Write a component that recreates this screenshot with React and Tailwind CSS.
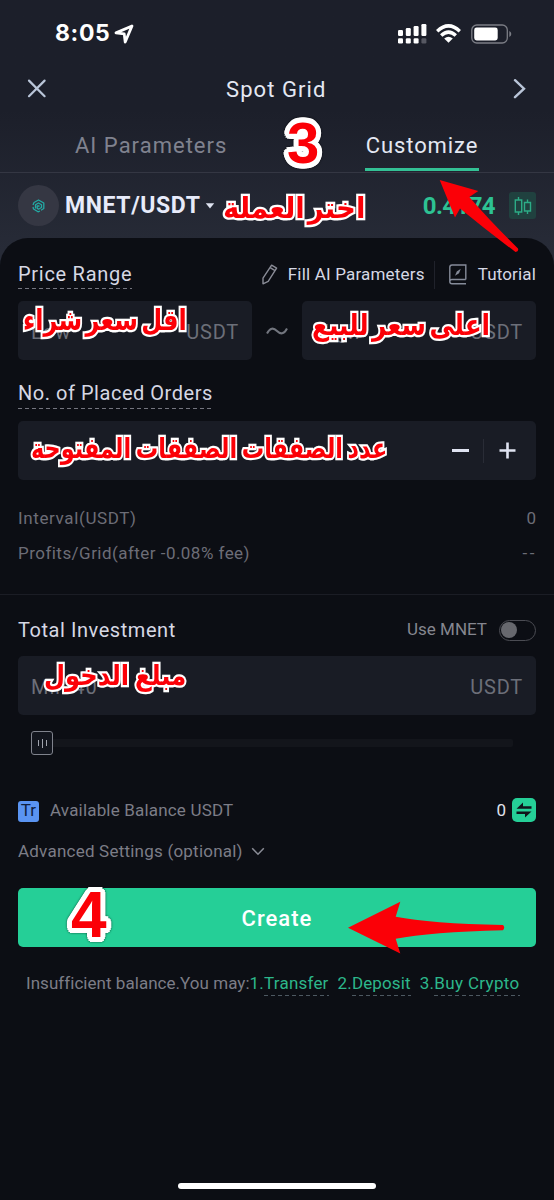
import React from 'react';

const StatusBar = () => (
  <div className="flex h-[66px] items-center justify-between pt-[1px] pr-[42px] pl-[55px]">
    <div className="flex items-center gap-[4px]">
      <span className="font-['Inter'] text-[23px] font-bold tracking-[0.65px] text-white">8:05</span>
      <svg width="20" height="20" viewBox="0 0 20 20" fill="none" stroke="#fff" strokeWidth="2.8" strokeLinejoin="round">
        <path d="M18 2 L2 8.9 L10.2 9.9 L11.2 18 Z" />
      </svg>
    </div>
    <div className="flex items-center">
      {/* Dual SIM signal */}
      <svg width="29" height="20" viewBox="0 0 29 20" fill="#fff">
        <rect x="0" y="6" width="5" height="6" rx="1.2" />
        <rect x="7.8" y="4" width="5" height="8" rx="1.2" />
        <rect x="15.6" y="2" width="5" height="10" rx="1.2" />
        <rect x="23.4" y="0" width="5" height="12" rx="1.2" />
        <rect x="0" y="14.2" width="5" height="5.3" rx="1.2" />
        <rect x="7.8" y="14.2" width="5" height="5.3" rx="1.2" />
        <rect x="15.6" y="14.2" width="5" height="5.3" rx="1.2" />
        <rect x="23.4" y="14.2" width="5" height="5.3" rx="1.2" fill="#565862" />
      </svg>
      <svg className="ml-[9px]" width="25" height="19" viewBox="0 0 25 19" fill="none" stroke="#fff" strokeWidth="3.4">
        <path d="M1.2 7.2 Q12.5 -3.4 23.8 7.2" />
        <path d="M5.2 11.6 Q12.5 4.6 19.8 11.6" />
        <path d="M12.5 18.8 L8.2 14.6 Q12.5 11 16.8 14.6 Z" fill="#fff" stroke="none" />
      </svg>
      <svg className="ml-[10px]" width="41" height="20" viewBox="0 0 41 20" fill="none">
        <rect x="0.8" y="1" width="35.5" height="18" rx="5" stroke="#7b7d85" strokeWidth="1.3" />
        <rect x="3.2" y="3.5" width="23.5" height="13" rx="2.4" fill="#fff" />
        <path d="M38.3 7 Q40.3 8 40.3 10 Q40.3 12 38.3 13 Z" fill="#7b7d85" />
      </svg>
    </div>
  </div>
);

const TitleBar = () => (
  <div className="flex h-[46px] items-center pr-[28px] pl-[27px]">
    <svg width="20" height="20" viewBox="0 0 20 20" stroke="#b9c5d8" strokeWidth="2.2" strokeLinecap="round">
      <path d="M2 1.6 L17.6 17.2 M17.6 1.6 L2 17.2" />
    </svg>
    <h1 className="ml-[179px] text-[22px] tracking-[1.07px] text-[#e4e8f3]">Spot Grid</h1>
    <svg className="ml-auto" width="13" height="20" viewBox="0 0 13 20" fill="none" stroke="#b9c5d8" strokeWidth="2.4" strokeLinecap="round">
      <path d="M2 1.2 L11 9.7 L2 18.2" />
    </svg>
  </div>
);

const Tabs = () => (
  <div className="flex h-[61px] justify-between border-b border-[#343743] pr-[75px] pl-[75px] text-[22px]">
    <div className="flex h-[60px] items-center pt-[7px] tracking-[1.02px] text-[#80828f]">AI Parameters</div>
    <div className="flex h-[59px] w-[114px] items-center justify-center border-b-[3px] border-[#33c195] pt-[11px] tracking-[0.91px] whitespace-nowrap text-[#e4e8f3]">
      Customize
    </div>
  </div>
);

const PairBar = () => (
  <div className="flex h-[65px] items-center px-[18px]">
    <div className="flex size-[41px] items-center justify-center rounded-full bg-[#353743]">
      <svg width="13" height="14" viewBox="0 0 13 14" fill="none" stroke="#23aaa4" strokeWidth="1.3" strokeLinejoin="round">
        <path d="M1 6 L2 3.5 L6.5 1 L11.8 4 V9.5 L9 11.3 M1 8 L1.5 10 L6 12.8 L8 12" />
        <path d="M3.5 9.5 V5.8 L6.5 4 L9.5 5.8 V8.5 L6.5 10.2 L5.2 9.2 V7 H7.5" />
      </svg>
    </div>
    <span className="ml-[6px] pt-[1px] text-[23px] font-bold tracking-[0.6px] text-[#e7ebfa]">MNET/USDT</span>
    <svg className="ml-[4px]" width="10" height="6" viewBox="0 0 10 6" fill="#dfe3f0">
      <path d="M0.8 0.3 H9.2 L5 5.4 Z" />
    </svg>
    <span className="ml-auto text-[24px] font-bold tracking-[-0.6px] text-[#2dc293]">0.4174</span>
    <div className="ml-[14px] flex size-[27px] items-center justify-center rounded-[3px] bg-[#20413f]">
      <svg width="18" height="20" viewBox="0 0 18 20" fill="none" stroke="#2cac87" strokeWidth="1.4">
        <path d="M4.5 1 V4 M4.5 16 V19 M1.3 4 H7.7 V16 H1.3 Z" />
        <path d="M13.5 3.5 V6.5 M13.5 15 V18 M10.5 6.5 H16.5 V15 H10.5 Z" />
      </svg>
    </div>
  </div>
);

// Label with the dashed "has a tooltip" underline
const HintLabel = ({ children, className }) => (
  <div
    className={`flex h-[29px] items-center bg-[linear-gradient(90deg,#74757f_4.5px,transparent_4.5px)] bg-[length:7px_1px] bg-bottom-left bg-repeat-x pb-[2px] text-[20px] whitespace-nowrap text-[#d6d8e4] ${className}`}
  >
    {children}
  </div>
);

const Field = ({ placeholder, unit, className }) => (
  <div className={`flex h-[59px] items-center justify-between rounded-[5px] bg-[#191c25] pt-[2px] pr-[13px] pl-[13px] text-[20px] text-[#6c6f79] ${className}`}>
    <span className="tracking-[1px]">{placeholder}</span>
    <span className="tracking-[0.76px]">{unit}</span>
  </div>
);

const PriceRange = () => (
  <>
    <div className="flex h-[63px] items-center pt-[10px]">
      <HintLabel className="w-[114px] tracking-[0.72px]">Price Range</HintLabel>
      <svg className="ml-auto" width="17" height="21" viewBox="0 0 17 21" fill="none" stroke="#8a8c97" strokeWidth="1.4" strokeLinejoin="round">
        <path d="M10.6 1.2 L15.6 4.2 L7.2 17.4 L2 19.8 L2 14.2 Z" />
        <path d="M9.2 3.6 L14 6.6" />
      </svg>
      <span className="ml-[10px] pt-[1px] text-[17px] tracking-[0.19px] text-[#d6d8e4]">Fill AI Parameters</span>
      <div className="ml-[9px] h-[28px] w-px bg-[#20222b]" />
      <svg className="ml-[14px]" width="18" height="21" viewBox="0 0 18 21" fill="none" stroke="#858b99" strokeWidth="1.4">
        <path d="M16.8 15.5 V1 H3 Q0.8 1 0.8 3.2 V17.5 Q0.8 19.8 3 19.8 H17 M0.8 17.5 Q0.8 15.5 3 15.5 H16.8" />
        <path d="M11.8 4.8 L10 9.2 L6 11.8 L7.8 7.6 Z" fill="#858b99" stroke="none" />
      </svg>
      <span className="ml-[11px] pt-[1px] text-[17px] tracking-[0.15px] text-[#d6d8e4]">Tutorial</span>
    </div>
    <div className="flex items-center justify-between">
      <Field className="w-[234px]" placeholder="Low" unit="USDT" />
      <svg width="24" height="10" viewBox="0 0 24 10" fill="none" stroke="#72757e" strokeWidth="2">
        <path d="M2 7.5 C5 1.5 8.5 1.5 12 5 C15.5 8.5 19 8.5 22 2.5" />
      </svg>
      <Field className="w-[234px]" placeholder="High" unit="USDT" />
    </div>
  </>
);

const PlacedOrders = () => (
  <>
    <div className="flex h-[61px] items-center pt-[7px]">
      <HintLabel className="w-[195px] tracking-[0.53px]">No. of Placed Orders</HintLabel>
    </div>
    <div className="flex h-[59px] items-center justify-end rounded-[5px] bg-[#191c25] pr-[20px]">
      <div className="h-[3px] w-[17px] bg-[#dfe3f1]" />
      <div className="ml-[14px] h-[24px] w-px bg-[#292c36]" />
      <svg className="ml-[15px]" width="17" height="17" viewBox="0 0 17 17" stroke="#dfe3f1" strokeWidth="2.6">
        <path d="M0.5 8.5 H16.5 M8.5 0.5 V16.5" />
      </svg>
    </div>
    <div className="mt-[21px] text-[17px] text-[#6c6d77]">
      <div className="flex h-[35px] items-center justify-between">
        <span className="tracking-[0.62px]">Interval(USDT)</span>
        <span>0</span>
      </div>
      <div className="flex h-[35px] items-center justify-between">
        <span className="tracking-[0.46px]">Profits/Grid(after -0.08% fee)</span>
        <span className="-mr-[1px] tracking-[2.5px]">--</span>
      </div>
    </div>
  </>
);

const Investment = () => (
  <>
    <div className="flex h-[61px] items-center justify-between pt-[9px]">
      <span className="text-[20px] tracking-[0.56px] text-[#d6d8e4]">Total Investment</span>
      <div className="flex items-center gap-[12px]">
        <span className="text-[17px] text-[#85868f]">Use MNET</span>
        <div className="flex h-[21px] w-[37px] items-center rounded-full border-[1.5px] border-[#4b4c53] pl-[1px]">
          <div className="size-[16px] rounded-full bg-[#67686e]" />
        </div>
      </div>
    </div>
    <Field placeholder="Min 40" unit="USDT" />
    <div className="flex h-[56px] items-center pr-[23px] pl-[13px]">
      <div className="flex h-[24px] w-[22px] items-center justify-center gap-[3px] rounded-[3px] border-[1.5px] border-[#80838d] bg-[#12151d]">
        <div className="h-[6px] w-px bg-[#a0a3ad]" />
        <div className="h-[9px] w-px bg-[#a0a3ad]" />
        <div className="h-[6px] w-px bg-[#a0a3ad]" />
      </div>
      <div className="h-[8px] grow rounded-r-[2px] bg-[#13151b]" />
    </div>
  </>
);

const Balance = () => (
  <>
    <div className="mt-[20px] flex h-[40px] items-center text-[17px]">
      <div className="flex size-[21px] items-center justify-center rounded-[3px] bg-[#5a94f2] text-[17px] text-[#10203f]">Tr</div>
      <span className="ml-[11px] tracking-[0.18px] text-[#7c7d87]">Available Balance USDT</span>
      <span className="ml-auto text-[#e0e2ec]">0</span>
      <svg className="mb-[2px] ml-[6px]" width="24" height="24" viewBox="0 0 24 24">
        <rect width="24" height="24" rx="5" fill="#25cf97" />
        <path d="M4.5 10.7 L11 4.5 V8.3 H19.5 V10.7 Z" fill="#10141b" />
        <path d="M19.5 13.5 L13 19.5 V15.9 H4.5 V13.5 Z" fill="#10141b" />
      </svg>
    </div>
    <div className="flex h-[40px] items-center pt-[1px] text-[17px] text-[#7c7d87]">
      <span className="tracking-[0.22px]">Advanced Settings (optional)</span>
      <svg className="ml-[8px]" width="14" height="9" viewBox="0 0 14 9" fill="none" stroke="#8a8c96" strokeWidth="1.5">
        <path d="M1.2 1.2 L7 7.2 L12.8 1.2" />
      </svg>
    </div>
  </>
);

const LinkText = ({ index, children, className }) => (
  <span className={`flex items-center text-[#2cb78b] ${className}`}>
    <span>{index}.</span>
    <span className="flex h-[25px] items-center bg-[linear-gradient(90deg,#4d5861_4.5px,transparent_4.5px)] bg-[length:7px_1px] bg-bottom-left bg-repeat-x">
      {children}
    </span>
  </span>
);

const note = 'absolute origin-left leading-none font-bold whitespace-nowrap text-[#fb0007]';
const arabic = "font-['DejaVu_Sans',sans-serif] [paint-order:stroke_fill] [-webkit-text-stroke:4.5px_#fff]";
// Ring of offset shadows gives the digits a thick outline with round corners
const digit =
  "font-['Liberation_Sans',sans-serif] drop-shadow-[0_0_1px_#0009] [text-shadow:5px_0_#fff,4.6px_1.9px_#fff,3.5px_3.5px_#fff,1.9px_4.6px_#fff,0_5px_#fff,-1.9px_4.6px_#fff,-3.5px_3.5px_#fff,-4.6px_1.9px_#fff,-5px_0_#fff,-4.6px_-1.9px_#fff,-3.5px_-3.5px_#fff,-1.9px_-4.6px_#fff,0_-5px_#fff,1.9px_-4.6px_#fff,3.5px_-3.5px_#fff,4.6px_-1.9px_#fff,2.5px_0_#fff,-2.5px_0_#fff,0_2.5px_#fff,0_-2.5px_#fff]";

// Hand-drawn tutorial notes lying over the screen
const Annotations = () => (
  <div className="pointer-events-none absolute inset-0">
    <span className={`${note} ${digit} top-[114px] left-[287px] text-[58px]`}>3</span>
    <span className={`${note} ${digit} top-[883px] left-[71px] text-[64px]`}>4</span>
    <span dir="rtl" className={`${note} ${arabic} top-[194px] left-[223px] scale-x-[.95] text-[29px] [word-spacing:-7px]`}>اختر العملة</span>
    <span dir="rtl" className={`${note} ${arabic} top-[306px] left-[23px] scale-x-[.83] text-[29px] [word-spacing:-6px]`}>اقل سعر شراء</span>
    <span dir="rtl" className={`${note} ${arabic} top-[311px] left-[312px] scale-x-[.855] text-[29px] [word-spacing:-6px]`}>اعلى سعر للبيع</span>
    <span dir="rtl" className={`${note} ${arabic} top-[435px] left-[31px] scale-x-[.8] text-[28px] [word-spacing:-4px]`}>عدد الصفقات الصفقات المفتوحة</span>
    <span dir="rtl" className={`${note} ${arabic} top-[662px] left-[44px] scale-x-[.865] text-[28px] [word-spacing:-3px]`}>مبلغ الدخول</span>
    <svg className="absolute top-[178px] left-[438px]" width="84" height="78" viewBox="438 178 84 78" fill="#fb0007">
      <path d="M439.7 180 L478.3 191 L469.3 197 Q491 222 518 248.5 Q519 251.5 515.5 252 Q486 230 460 208.5 L455 217.5 Z" />
    </svg>
    <svg className="absolute top-[900px] left-[346px]" width="162" height="56" viewBox="346 900 162 56" fill="#fb0007">
      <path d="M348 927.7 L400.3 901.7 L395.7 916.7 Q430 923.5 503 925 Q505.5 927.5 503 930.2 Q430 932 395.7 938.7 L400.3 953.5 Z" />
    </svg>
  </div>
);

export default function App() {
  return (
    <div className="relative flex h-[1200px] w-[554px] flex-col overflow-hidden bg-linear-to-b from-[#1c1f2a] from-[110px] to-[#272b37] to-[250px] font-['Roboto',sans-serif]">
      <StatusBar />
      <TitleBar />
      <Tabs />
      <PairBar />
      <main className="flex grow flex-col rounded-t-[28px] bg-[#0c0e14]">
        <div className="px-[18px]">
          <PriceRange />
          <PlacedOrders />
        </div>
        <div className="mt-[23px] h-px shrink-0 bg-[#1b1d25]" />
        <div className="px-[18px]">
          <Investment />
          <Balance />
          <button className="mt-[17px] flex h-[59px] w-full items-center justify-center rounded-[5px] bg-[#25cf97] pt-[1px] text-[22px] font-medium tracking-[1.02px] text-white">
            Create
          </button>
          <div className="flex h-[73px] items-center pl-[8px] text-[17px] whitespace-nowrap text-[#7c7d87]">
            <span className="tracking-[0.04px]">Insufficient balance.You may:</span>
            <LinkText index={1} className="tracking-[0.21px]">Transfer</LinkText>
            <LinkText index={2} className="ml-[9px] tracking-[0.12px]">Deposit</LinkText>
            <LinkText index={3} className="ml-[9px] tracking-[0.34px]">Buy Crypto</LinkText>
          </div>
        </div>
        <div className="mt-auto mb-[11px] h-[6px] w-[198px] self-center rounded-full bg-white" />
      </main>
      <Annotations />
    </div>
  );
}
